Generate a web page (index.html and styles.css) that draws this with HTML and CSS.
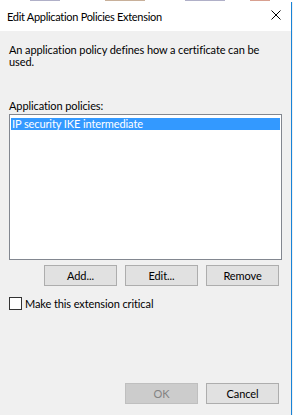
FILE: index.html
```html
<!DOCTYPE html>
<html lang="en">
<head>
    <meta charset="UTF-8">
    <meta name="viewport" content="width=device-width, initial-scale=1.0">
    <title>Edit Application Policies Extension</title>
    <link rel="stylesheet" href="styles.css">
</head>
<body>
    <div class="screen">
        <div class="behind">
            <span class="mark m1"></span>
            <span class="mark m2"></span>
            <span class="mark m3"></span>
            <span class="mark m4"></span>
        </div>
        <div class="dialog">
            <div class="titlebar">
                <span class="title">Edit Application Policies Extension</span>
                <svg class="close" width="10" height="10" viewBox="0 0 10 10">
                    <path d="M0.5 0.5 L9.5 9.5 M9.5 0.5 L0.5 9.5" stroke="#000" stroke-width="1" fill="none"/>
                </svg>
            </div>
            <div class="content">
                <p class="desc">An application policy defines how a certificate can be used.</p>
                <div class="field-label">Application policies:</div>
                <div class="listbox">
                    <div class="item selected">IP security IKE intermediate</div>
                </div>
                <div class="list-buttons">
                    <button class="btn">Add...</button>
                    <button class="btn">Edit...</button>
                    <button class="btn">Remove</button>
                </div>
                <label class="check">
                    <span class="box"></span>
                    <span>Make this extension critical</span>
                </label>
                <div class="footer">
                    <button class="btn" disabled>OK</button>
                    <button class="btn">Cancel</button>
                </div>
            </div>
        </div>
    </div>
</body>
</html>
```

FILE: styles.css
```css
body {
    margin: 0;
    padding: 0;
    font-family: Lato, "Noto Sans", sans-serif;
    font-size: 11px;
    letter-spacing: -0.1px;
    color: #000;
    background-color: #f0f0f0;
}
.screen {
    width: 293px;
    height: 415px;
    overflow: hidden;
    display: flex;
    flex-direction: column;
}
.behind {
    height: 2px;
    background-color: #fff;
    display: flex;
}
.mark {
    height: 1px;
    display: block;
}
.m1 { width: 30px; margin-left: 30px; background-color: #b0b0c8; }
.m2 { width: 40px; margin-left: 45px; background-color: #c8b09a; }
.m3 { width: 40px; margin-left: 40px; background-color: #b0b0c8; }
.m4 { width: 20px; margin-left: 25px; background-color: #d8a090; }
.dialog {
    flex: 1;
    width: 291px;
    border-right: 1px solid #1883d7;
    background-color: #f0f0f0;
    display: flex;
    flex-direction: column;
}
.titlebar {
    height: 29px;
    background-color: #fff;
    display: flex;
    align-items: center;
    justify-content: space-between;
    padding: 0 10px 0 7px;
}
.title {
    font-size: 11px;
    letter-spacing: -0.3px;
}
.close {
    display: block;
    margin-top: -4px;
}
.content {
    flex: 1;
    display: flex;
    flex-direction: column;
    padding: 0 9px;
}
.desc {
    margin: 13px 0 0 0;
    width: 265px;
    line-height: 12px;
}
.field-label {
    margin-top: 32px;
    line-height: 12px;
}
.listbox {
    margin-top: 2px;
    width: 273px;
    height: 146px;
    border: 1px solid #828790;
    background-color: #fff;
    padding: 3px 1px;
    box-sizing: border-box;
}
.item {
    height: 12px;
    line-height: 12px;
    padding-left: 1px;
}
.item.selected {
    background-color: #3399ff;
    color: #fff;
}
.list-buttons {
    display: flex;
    justify-content: flex-end;
    gap: 8px;
    margin-top: 5px;
    padding-right: 3px;
}
.btn {
    width: 73px;
    height: 21px;
    padding: 0;
    font-family: inherit;
    font-size: 11px;
    letter-spacing: -0.1px;
    color: #000;
    background-color: #e1e1e1;
    border: 1px solid #adadad;
}
.btn:disabled {
    background-color: #cccccc;
    border-color: #bfbfbf;
    color: #838383;
}
.check {
    display: flex;
    align-items: center;
    gap: 3px;
    margin-top: 11px;
}
.box {
    width: 11px;
    height: 11px;
    border: 1px solid #333;
    background-color: #fff;
}
.footer {
    margin-top: auto;
    margin-bottom: 11px;
    display: flex;
    justify-content: flex-end;
    gap: 8px;
    padding-right: 3px;
}
```
